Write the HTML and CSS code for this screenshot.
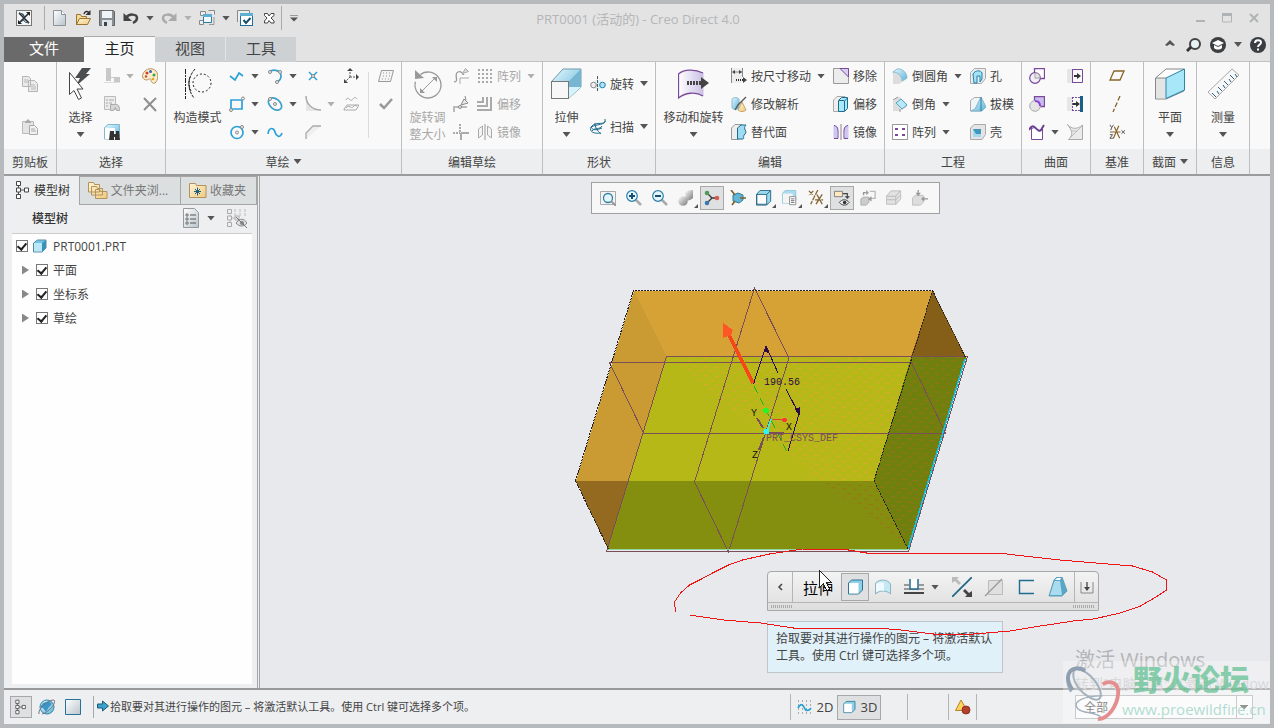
FILE: index.html
```
<!DOCTYPE html>
<html lang="zh-CN">
<head>
    <meta charset="UTF-8">
    <meta name="viewport" content="width=device-width, initial-scale=1.0">
    <title>PRT0001 (活动的) - Creo Direct 4.0</title>
    <link rel="stylesheet" href="styles.css">
</head>
<body>
<svg class="sprite" width="0" height="0" aria-hidden="true">
    <defs>
        <linearGradient id="blue" x1="0" y1="0" x2="1" y2="1"><stop offset="0" stop-color="#e6f8fe"/><stop offset="1" stop-color="#5db5da"/></linearGradient>
        <linearGradient id="gray" x1="0" y1="0" x2="1" y2="1"><stop offset="0" stop-color="#fff"/><stop offset="1" stop-color="#b9c4cb"/></linearGradient>
        <linearGradient id="violet" x1="0" y1="0" x2="1" y2="0"><stop offset="0" stop-color="#fff"/><stop offset="1" stop-color="#c9bfe4"/></linearGradient>
        <linearGradient id="gold" x1="0" y1="0" x2="1" y2="1"><stop offset="0" stop-color="#fff4d4"/><stop offset="1" stop-color="#efca80"/></linearGradient>
        <linearGradient id="ball" x1="0" y1="0" x2="1" y2="1"><stop offset="0" stop-color="#fff"/><stop offset="1" stop-color="#777"/></linearGradient>
    </defs>

    <!-- title bar -->
    <symbol id="i-logo" viewBox="0 0 16 16"><rect x=".5" y=".5" width="15" height="15" fill="#f4f4f4" stroke="#777"/><path d="M3 3l10 10M13 3L3 13" stroke="#222" stroke-width="1.5"/><path d="M3 3c5 1 5 1 5 5s0 4 5 5M6 4l3 3M4 12l4-2" stroke="#234c66" fill="none"/><path d="M10 2h4v4zM2 10v4h4z" fill="#222"/></symbol>
    <symbol id="i-new" viewBox="0 0 16 16"><path d="M2.500.5h8l4 4v11h-12z" fill="url(#gray)" stroke="#8b9298"/><path d="M10.500.5v4h4" fill="#fff" stroke="#8b9298"/></symbol>
    <symbol id="i-open" viewBox="0 0 16 16"><path d="M1.500 15V4.500h4l1 2h5V9" fill="#f6d998" stroke="#9c7434"/><path d="M1.500 14.500l3-6h11l-3 6z" fill="url(#gold)" stroke="#9c7434"/><path d="M9 4c1-3 3-3 5-1.500" stroke="#333" stroke-width="1.500" fill="none"/><path d="M15.500 0v5h-5z" fill="#333"/></symbol>
    <symbol id="i-save" viewBox="0 0 16 16"><path d="M.5.5h14l1 1v14H.5z" fill="#8a8f94" stroke="#666"/><path d="M3 1h10v7H3z" fill="#eef4f7"/><path d="M3 10h10v6H3z" fill="#dfe7ec"/><path d="M5 12h3v4H5z" fill="#444"/></symbol>
    <symbol id="i-undo" viewBox="0 0 16 16"><path d="M3 8c3-5 11-4 11 0 0 3-2 4-4 5" fill="none" stroke="currentColor" stroke-width="2.500"/><path d="M.5 3v8H9z" fill="currentColor"/></symbol>
    <symbol id="i-redo" viewBox="0 0 16 16"><path d="M13 8C10 3 2 4 2 8c0 3 2 4 4 5" fill="none" stroke="currentColor" stroke-width="2.500"/><path d="M15.500 3v8H7z" fill="currentColor"/></symbol>
    <symbol id="i-windows" viewBox="0 0 16 16"><path d="M1.500 1.500h5v4h-5zM9.500.5h6v4M.5 10.500h4v4h-4z" fill="#eee" stroke="#888"/><path d="M4.500 4.500h8v8h-8z" fill="#f4fafd" stroke="#2a7ba0"/><path d="M4 4h9v3H4z" fill="#5fb0d0"/><path d="M10 14.500h5V7" fill="none" stroke="#999"/></symbol>
    <symbol id="i-regen" viewBox="0 0 16 16"><path d="M.5 12V.5h12V3" fill="#eee" stroke="#888"/><rect x="3.500" y="3.500" width="12" height="12" fill="#fff" stroke="#1f6c96"/><path d="M3 3h13v3H3z" fill="#5fb0d0"/><path d="M6.500 10l2.500 3 4.500-5" fill="none" stroke="#14506e" stroke-width="2"/></symbol>
    <symbol id="i-closewin" viewBox="0 0 16 16"><path d="M3.500 3.500h3L8 6l2-2.500h3v2L10 8l3 3v2h-3L8 10.500 6.500 13h-3v-2L6 8 3.500 5.500z" fill="#fff" stroke="#444"/></symbol>
    <symbol id="i-min" viewBox="0 0 16 16"><path d="M4 10h9v2H4z" fill="#b0b3b5"/></symbol>
    <symbol id="i-max" viewBox="0 0 16 16"><path d="M3.500 4h9v8h-9z" fill="none" stroke="#b0b3b5"/><path d="M3 3h10v3H3z" fill="#b0b3b5"/></symbol>
    <symbol id="i-close" viewBox="0 0 16 16"><path d="M4 4l8 8M12 4l-8 8" stroke="#b0b3b5" stroke-width="2"/></symbol>
    <symbol id="i-up" viewBox="0 0 16 16"><path d="M3 8l5-5 5 5-2 1-3-2-3 2z" fill="#555"/></symbol>
    <symbol id="i-find" viewBox="0 0 16 16"><circle cx="9" cy="7" r="5" fill="#e8f2f6" stroke="#444" stroke-width="2"/><path d="M5 10l-4 4" stroke="#333" stroke-width="3"/></symbol>
    <symbol id="i-learn" viewBox="0 0 16 16"><circle cx="8" cy="8" r="8" fill="#3c3f42"/><path d="M2 6l6-3 6 3-6 3zM4 8l4 2 4-2v3c-2 2-6 2-8 0z" fill="#fff"/></symbol>
    <symbol id="i-help" viewBox="0 0 16 16"><circle cx="8" cy="8" r="8" fill="#3c3f42"/><path d="M5 6c0-4 6-3.500 6-.5C11 7.500 8 8 8 10" fill="none" stroke="#fff" stroke-width="2"/><path d="M7 11.500h2v2H7z" fill="#fff"/></symbol>

    <!-- ribbon: clipboard and selection -->
    <symbol id="i-copy" viewBox="0 0 16 16"><path d="M.5.5h6l2 2v8h-8zM6.500 4.500h6l3 3v8h-9z" fill="#eaeaea" stroke="#b5b5b5"/><path d="M2 4h4M2 6h4M9 9h4M9 11h5M9 13h5" stroke="#bbb"/></symbol>
    <symbol id="i-paste" viewBox="0 0 16 16"><path d="M.5 2.500h11v12H.5z" fill="#e4e4e4" stroke="#bbb"/><path d="M3 3l3-3 3 3v1H3z" fill="#aaa"/><path d="M7.500 6.500h5l3 3v6h-8z" fill="#f1f1f1" stroke="#aaa"/><path d="M9 10h4M9 12h5" stroke="#aaa"/></symbol>
    <symbol id="b-select" viewBox="0 0 32 32"><path d="M17 0h9l-5 6h4L11 18l4-8h-5z" fill="#4b4e51"/><path d="M4.500 4.500v22l4.500-4 4.500 9 3-1.500-4.500-9h6z" fill="#fff" stroke="#444"/></symbol>
    <symbol id="i-align" viewBox="0 0 16 16"><path d="M2 0h5v9h9v5h-6v-4H7v3H2z" fill="#c8c8c8"/><path d="M0 14.500h16" stroke="#ddd"/></symbol>
    <symbol id="i-palette" viewBox="0 0 16 16"><path d="M3 3c3-3 8-3 11 0 3 4 2 9-1 12-2 1-4-1-4-3s-2-1-4 0C0 12-1 7 3 3z" fill="#fdeecb" stroke="#b3925c"/><circle cx="5" cy="5" r="1.500" fill="#cf3c2e"/><circle cx="8.500" cy="3.500" r="1.500" fill="#3565b8"/><circle cx="12" cy="7" r="1.500" fill="#3c9b4d"/><circle cx="4" cy="8.500" r="1.200" fill="#c24c3c"/><circle cx="11" cy="11" r="1.300" fill="#e2a22b"/></symbol>
    <symbol id="i-props" viewBox="0 0 16 16"><path d="M.5.5h11v13H.5z" fill="#ececec" stroke="#bbb"/><path d="M2 4h2M5 4h5M2 7h2M5 7h3M2 10h2" stroke="#aaa"/><path d="M6.500 8.500h5c2 0 4 0 4 6h-3l-1-3-2 3h-3z" fill="#d6d6d6" stroke="#aaa"/></symbol>
    <symbol id="i-delete" viewBox="0 0 16 16"><path d="M2 2l12 13M14 2L2 14" stroke="#8f8f8f" stroke-width="2"/></symbol>
    <symbol id="i-findobj" viewBox="0 0 16 16"><path d="M.5 3.500L4 .5h11.500V12L12 15H.5z" fill="url(#blue)" stroke="#7fb8cf"/><path d="M1 4h10v11H1z" fill="#fff"/><path d="M6 7h4v3h2V7h3l1 9h-5v-3h-1v3H5z" fill="#333"/></symbol>

    <!-- ribbon: sketch -->
    <symbol id="b-construct" viewBox="0 0 32 32"><path d="M3.500 1v30" stroke="#222" stroke-dasharray="5 1 2 1"/><path d="M13 1C5 10 5 21 12 30M8 9c-2 5-1 10 1 14" fill="none" stroke="#222" stroke-dasharray="3 1"/><circle cx="20" cy="15" r="9" fill="none" stroke="#222" stroke-dasharray="2 2"/></symbol>
    <symbol id="i-line" viewBox="0 0 16 16"><path d="M1 7l5 4 4-7 4 3" transform="translate(0 1)" fill="none" stroke="#2ba2d6" stroke-width="1.700"/></symbol>
    <symbol id="i-arc" viewBox="0 0 16 16"><path d="M2 4c5-4 12-1 12 4 0 3-2 5-4 6" fill="none" stroke="#3a9fce" stroke-width="1.700"/><g fill="#eee" stroke="#888"><circle cx="3" cy="4" r="1.500"/><circle cx="13" cy="4" r="1.500"/><circle cx="10" cy="14" r="1.500"/></g></symbol>
    <symbol id="i-point" viewBox="0 0 16 16"><path d="M4 4l8 8M12 4l-8 8" stroke="#2ba2d6" stroke-width="1.500"/><circle cx="8" cy="8" r="1.500" fill="#eee" stroke="#888"/></symbol>
    <symbol id="i-csys" viewBox="0 0 16 16"><path d="M7 9V2M7 9h7M7 9l-5 5" stroke="#555" stroke-dasharray="2 1"/><path d="M4 3l3-3 3 3zM13 6l3 3-3 3zM1 11v4h4z" fill="#444"/></symbol>
    <symbol id="i-rect" viewBox="0 0 16 16"><path d="M2 4h11v9H2z" fill="none" stroke="#2ba2d6" stroke-width="1.700"/><g fill="#eee" stroke="#888"><circle cx="14" cy="2.500" r="1.500"/><circle cx="2" cy="14" r="1.500"/></g></symbol>
    <symbol id="i-ellipse" viewBox="0 0 16 16"><ellipse cx="8" cy="8" rx="7.500" ry="5" transform="rotate(40 8 8)" fill="none" stroke="#3a9fce" stroke-width="1.700"/><g fill="#eee" stroke="#888"><circle cx="8" cy="8" r="1.500"/><circle cx="3" cy="3" r="1.500"/></g></symbol>
    <symbol id="i-circle" viewBox="0 0 16 16"><circle cx="8" cy="8.500" r="6" fill="none" stroke="#2ba2d6" stroke-width="1.700"/><g fill="#eee" stroke="#888"><circle cx="8" cy="8.500" r="1.500"/><circle cx="13" cy="3" r="1.500"/></g></symbol>
    <symbol id="i-spline" viewBox="0 0 16 16"><path d="M1 10c1-8 6-6 7-2s5 7 7 1" fill="none" stroke="#2ba2d6" stroke-width="1.700"/></symbol>
    <symbol id="i-fillet" viewBox="0 0 16 16"><path d="M1 0v15h15C7 15 1 9 1 0z" fill="#e6e6e6"/><path d="M1 0c0 8 6 14 15 14" fill="none" stroke="#aaa" stroke-width="1.500"/></symbol>
    <symbol id="i-chamfer" viewBox="0 0 16 16"><path d="M1 15V9l7-7h8L1 15z" fill="#efefef"/><path d="M1 15V9l7-7h8" fill="none" stroke="#aaa" stroke-width="1.300"/></symbol>
    <symbol id="i-project" viewBox="0 0 16 16"><path d="M3 4c2-5 4 2 6 0s3-4 5-1M1 13l3-4h12l-3 5H1zM3 12c3-4 5 1 7-1s2-2 4-1" fill="none" stroke="#aaa"/></symbol>
    <symbol id="i-plane" viewBox="0 0 16 16"><path d="M3.500 2.500h12l-3 11H.5z" fill="#f4f4f4" stroke="#999"/><path d="M5 5h9M5 8h8M4 11h8" stroke="#999" stroke-dasharray="1 2"/></symbol>
    <symbol id="i-ok" viewBox="0 0 16 16"><path d="M2 8l4 4 8-9" fill="none" stroke="#999" stroke-width="2.500"/></symbol>

    <!-- ribbon: edit sketch -->
    <symbol id="b-resize" viewBox="0 0 32 32"><circle cx="16" cy="17" r="13" fill="none" stroke="#999" stroke-width="1.300" stroke-dasharray="72 10" transform="rotate(-125 16 17)"/><path d="M3 2v9l9-1zM8 25v-5l5 5zM25 9v5l-5-5z" fill="#999"/><path d="M10 23l13-13" stroke="#999"/></symbol>
    <symbol id="i-modify" viewBox="0 0 16 16"><path d="M1 14c6 0-1-8 4-10s4 4 6 2" fill="none" stroke="#999" stroke-width="1.300"/><path d="M9.500 5.500l3-5 3 3zM7 10h9M7 10v6" fill="#ddd" stroke="#aaa"/></symbol>
    <symbol id="i-divide" viewBox="0 0 16 16"><path d="M0 11h14M1 11v5" stroke="#bbb" stroke-width="2"/><path d="M8 9l3-6 4 4z" fill="#eee" stroke="#888"/><path d="M12 0l1 4" stroke="#888"/><circle cx="7" cy="11" r="1.500" fill="#eee" stroke="#888"/></symbol>
    <symbol id="i-corner" viewBox="0 0 16 16"><path d="M8 9h8M8 9v7" stroke="#aaa" stroke-width="2"/><path d="M0 9h7M7 0v8" stroke="#aaa" stroke-width="2" stroke-dasharray="2 1"/></symbol>
    <symbol id="i-grid" viewBox="0 0 16 16"><path d="M1 2h15M1 6h15M1 10h15M1 14h15" stroke="#aaa" stroke-width="2" stroke-dasharray="2 2"/></symbol>
    <symbol id="i-offsets" viewBox="0 0 16 16"><path d="M6 1v5H0M10 1v9H0M14 1v13H0" fill="none" stroke="#aaa" stroke-width="2"/></symbol>
    <symbol id="i-mirrors" viewBox="0 0 16 16"><path d="M1.500 5l4-3v9l-4 3zM14.500 5l-4-3v9l4 3z" fill="#f4f4f4" stroke="#aaa"/><path d="M8 0v16" stroke="#999"/></symbol>

    <!-- ribbon: shapes -->
    <symbol id="b-extrude" viewBox="0 0 32 32"><path d="M1 13L12 1h18v18L18 30z" fill="url(#blue)" stroke="#6f9aad"/><path d="M18 13L30 1v18H18z" fill="#76b6d2"/><path d="M18 30V19h12z" fill="#d5f3fc"/><rect x=".5" y="13.500" width="17" height="17" fill="#f7f7f7" stroke="#777"/></symbol>
    <symbol id="i-revolve" viewBox="0 0 16 16"><path d="M4 5l4-2 4 2v8l-4 1-4-1z" fill="#dff2f9"/><circle cx="3.500" cy="9" r="2.800" fill="#eee" stroke="#888"/><circle cx="12.500" cy="9" r="2.800" fill="#aee4f5" stroke="#2080ad"/><path d="M7.500 0v16" stroke="#555" stroke-dasharray="3 1"/></symbol>
    <symbol id="i-sweep" viewBox="0 0 16 16"><path d="M15 0c2 8-9 1-14 8 6-3 14-2 14-6M1 8c-2 5 3 7 10 6M1 8c2 4 6 3 11 1M2 12c3-4 8-1 10-5M5 4c0 6 4 9 6 11" fill="none" stroke="#1f6c8e"/></symbol>

    <!-- ribbon: edit -->
    <symbol id="b-move" viewBox="0 0 32 32"><path d="M.500 30V6c6-5 17-5 25-1v23C18 23 7 25 .500 30z" fill="url(#violet)"/><path d="M25 5C17 1 6 1 .500 6V30C7 25 17 23 25 28" fill="none" stroke="#7a4a9a" stroke-width="1.300"/><path d="M9 15h15" stroke="#444" stroke-width="4" stroke-dasharray="2 1"/><path d="M23 9l8 6-8 6z" fill="#444"/></symbol>
    <symbol id="i-dimmove" viewBox="0 0 16 16"><path d="M1 0h10v15H1z" fill="#eee"/><path d="M.500 0v15M11.500 0v9M2 4h9" stroke="#888"/><path d="M4 2v4L1 4zM8 2v4l3-2zM12 9l4 3-4 3z" fill="#444"/><path d="M5 12h8" stroke="#333" stroke-width="2" stroke-dasharray="1 1"/></symbol>
    <symbol id="i-analytic" viewBox="0 0 16 16"><path d="M1 3c2-2 5-2 7 0v9c-2 2-5 2-7 0z" fill="url(#blue)" stroke="#8fbccd"/><path d="M11 6l4 8c-2 2-6 2-8 0z" fill="url(#gold)" stroke="#c9a468"/><path d="M15 1L7 9l-3 5" stroke="#555" stroke-width="1.300" fill="none"/></symbol>
    <symbol id="i-replace" viewBox="0 0 16 16"><path d="M.5 4L4 .5h7V12l-4 3.500H.5z" fill="#eee" stroke="#999"/><path d="M6.500 4L10 1h5c-4 4 2 6-1 9s0 4-2 5H6.500z" fill="#9fdcf2" stroke="#1f6c8e"/></symbol>
    <symbol id="i-remove" viewBox="0 0 16 16"><path d="M.5.5h15v15H.5z" fill="#ececec" stroke="#999"/><path d="M7 .5h8.500V9z" fill="#d9cdf4" stroke="#7a4a9a"/></symbol>
    <symbol id="i-offset" viewBox="0 0 16 16"><path d="M.5 4L4 .5h8v12l-3 3H.5z" fill="#eee" stroke="#aaa"/><path d="M5.500 4.500l3-3h6v11l-3 3h-6z" fill="#a9e8fa" stroke="#1f6c8e"/><path d="M11.500 15V5l3-3M6 4.500h5" fill="none" stroke="#1f6c8e"/></symbol>
    <symbol id="i-mirror" viewBox="0 0 16 16"><path d="M.5 1.500h2c3 2 3 4 2 8v5h-4zM15.500 1.500h-2c-3 2-3 4-2 8v5h4z" fill="#cfc6f2"/><path d="M1 1.500c5 1 4 5 4 13H1M15 1.500c-5 1-4 5-4 13h4" fill="none" stroke="#7a4a9a"/><path d="M8 0v16" stroke="#888"/></symbol>

    <!-- ribbon: engineering -->
    <symbol id="i-round" viewBox="0 0 16 16"><path d="M1 7v9h6l8-5V8C15 4 10 0 5 1L0 4z" fill="#ddd"/><path d="M5 1c5-1 10 4 10 9l-5 3c0-5-4-9-9-9z" fill="url(#blue)" stroke="#8bbfd3"/></symbol>
    <symbol id="i-cham" viewBox="0 0 16 16"><path d="M1 5v10h7l7-4V8L8 1H5z" fill="#ddd"/><path d="M1 4l5-3M8 13v3" stroke="#999"/><path d="M9 3l6 6-5 4-6-6z" fill="#b8e9f8" stroke="#5aa3c1"/></symbol>
    <symbol id="i-pattern" viewBox="0 0 16 16"><path d="M.5.5h15v15H.5z" fill="#fff" stroke="#999"/><path d="M3 4h3v2H3zM10 4h3v2h-3zM3 10h3v2H3zM10 10h3v2h-3z" fill="#7a4a9a"/></symbol>
    <symbol id="i-hole" viewBox="0 0 16 16"><path d="M.5 4.500l4-4h11v10l-4 5H.5z" fill="#ededed" stroke="#aaa"/><path d="M3 6c2-4 8-4 9-1v6l-2 3V8H7v7H4z" fill="#a6e2f5" stroke="#2080ad"/></symbol>
    <symbol id="i-draft" viewBox="0 0 16 16"><path d="M.5 15V4.500l4-3H11V15z" fill="#eef5f8" stroke="#aaa"/><path d="M5 13L11 1l5 10-4 4H1z" fill="url(#blue)" stroke="#7fb5ca"/><path d="M11 1v14" stroke="#2d7c9d"/></symbol>
    <symbol id="i-shell" viewBox="0 0 16 16"><path d="M.5 4L4 .5h11.500v10L12 15.500H.5z" fill="#e4e4e4" stroke="#aaa"/><path d="M3 5h8v8H3z" fill="#3f97bf"/><path d="M3 13V5l3 5h5v3z" fill="#a4d9ed"/></symbol>

    <!-- ribbon: surfaces and datums -->
    <symbol id="i-merge" viewBox="0 0 16 16"><path d="M5.500.5h10v10h-10z" fill="#fff" stroke="#7a4a9a" stroke-width="1.300"/><circle cx="6" cy="10" r="5.300" fill="#f2f0f6" fill-opacity=".9" stroke="#7a4a9a" stroke-width="1.200"/><path d="M6 10V5c3 0 5 2 5 5z" fill="#e4e4e4" stroke="#aaa"/></symbol>
    <symbol id="i-trim" viewBox="0 0 16 16"><path d="M5.500.5h10v10h-10z" fill="#cbbdf0" stroke="#7a4a9a" stroke-width="1.300"/><circle cx="6" cy="10" r="5.300" fill="#e4e4e4" stroke="#aaa"/><path d="M6 5c3 0 5 2 5 5" fill="none" stroke="#8c44d6" stroke-width="2"/></symbol>
    <symbol id="i-fillsurf" viewBox="0 0 16 16"><path d="M2.500 3v12.500h11V5C10 11 7 0 2.500 5" fill="#fff" stroke="#7a4a9a"/><path d="M0 6c5-10 8 4 12 0l3-5" fill="none" stroke="#6d3f92" stroke-width="2"/></symbol>
    <symbol id="i-extend" viewBox="0 0 16 16"><path d="M0 1h5v14H0z" fill="#e6e6e6"/><path d="M5 1.500h10.500v13H5M5.500 1v14" fill="none" stroke="#7a4a9a"/><path d="M7 7h3V5l4 3-4 3V9H7z" fill="#333"/></symbol>
    <symbol id="i-extendto" viewBox="0 0 16 16"><path d="M0 1h5v14H0z" fill="#e6e6e6"/><path d="M5 1.500h9M5 14.500h9M5.500 1v14" stroke="#7a4a9a" stroke-dasharray="2 1"/><path d="M13 0h3v16h-3z" fill="#175f86"/><path d="M6 7h3V5l4 3-4 3V9H6z" fill="#333"/></symbol>
    <symbol id="i-style" viewBox="0 0 16 16"><path d="M.5.5c4 5 10 5 15 .5v14.500H1.500C7 10 5 7 .5.5z" fill="#ebebeb" stroke="#aaa"/><path d="M1.500 15.500l14-14M5 7l5 0" stroke="#bbb"/></symbol>
    <symbol id="i-dplane" viewBox="0 0 16 16"><path d="M5 3h10l-4 9H1z" fill="none" stroke="#86652a" stroke-width="1.300"/></symbol>
    <symbol id="i-axis" viewBox="0 0 16 16"><path d="M11 0L4 16" stroke="#86652a" stroke-width="1.300" stroke-dasharray="5 2"/></symbol>
    <symbol id="i-dcsys" viewBox="0 0 18 16"><path d="M1 8h12M6 2l6 13M11 1L5 15" stroke="#86652a" stroke-width="1.300"/><path d="M1 0l2 3 2-3M3 3l-1 3M14 6l4 4M18 6l-4 4M1 11h3l-3 4h4" fill="none" stroke="#444"/></symbol>
    <symbol id="b-section" viewBox="0 0 32 32"><path d="M1.500 10L12 1h18v22l-18 8H1.500z" fill="#fdfdfd" stroke="#888"/><path d="M2 10h10v20H2z" fill="#e4e4e4"/><path d="M12 10L30.500 1v21L12 30.500z" fill="#a8e6fa" stroke="#2a84ab"/><path d="M1.500 10H12" stroke="#888"/></symbol>
    <symbol id="b-ruler" viewBox="0 0 32 32"><path d="M1 24L25 1l7 6L8 31z" fill="#f7f7f7" stroke="#aaa"/><path d="M9 29l-4-4M12 26l-2-3M15 23l-4-4M18 20l-2-3M21 17l-4-4M24 14l-2-3M27 11l-4-4M30 9l-2-3" stroke="#235f83"/></symbol>

    <!-- navigator -->
    <symbol id="i-tree" viewBox="0 0 16 20"><path d="M3.500 4v13M5 10h5" stroke="#555"/><path d="M1.500 1.500h4v4h-4zM1.500 8h4v4h-4zM9.500 8h4v4h-4zM1.500 14.500h4v4h-4z" fill="#fff" stroke="#444"/></symbol>
    <symbol id="i-folders" viewBox="0 0 20 18"><path d="M.5 11V1.500h5l1 2h5V11zM3.500 14V5.500h5l1 2h5V14zM7.500 17.500V8.500h4l1 2h6.500v7z" fill="url(#gold)" stroke="#b3925c"/></symbol>
    <symbol id="i-fav" viewBox="-2 -1 20 18"><path d="M.5 15.500V1.500h6l1 2h9.500v12z" fill="url(#gold)" stroke="#b3925c"/><path d="M8.500 5.500v8M5 9.500h7M6 7l5 5M11 7l-5 5" stroke="#1d607f"/></symbol>
    <symbol id="i-settings" viewBox="0 0 16 20"><path d="M.5.5h11l4 4v15H.5z" fill="url(#gray)" stroke="#999"/><path d="M7 7h6M7 11h6M7 15h6" stroke="#555"/><path d="M3 6h2v2H3zM3 10h2v2H3zM3 14h2v2H3z" fill="#fff" stroke="#555" stroke-width=".8"/></symbol>
    <symbol id="i-hide" viewBox="0 0 20 20"><path d="M3 3v14M5 10h4M8 1v8M13 1v8M18 1v8" stroke="#bbb" stroke-dasharray="3 1"/><path d="M.5 1.500h4v4h-4zM.5 8h4v4h-4zM.5 14.500h4v4h-4zM8 8h4v4H8z" fill="#eee" stroke="#aaa"/><path d="M9 15c4-5 8-5 11 0-3 4-8 4-11 0z" fill="#ddd" stroke="#888"/><circle cx="15" cy="15" r="2" fill="#888"/><path d="M9 9l11 11" stroke="#777"/></symbol>
    <symbol id="i-part" viewBox="0 0 16 16"><path d="M1.500 5l4-3h8.500v8l-4 4H1.500z" fill="#72c5e6" stroke="#5a8aa0"/><path d="M2 5h8v8.500H2z" fill="#b9e9f8"/><path d="M10 5l4-3v8l-4 4z" fill="#3a92b8"/></symbol>

    <!-- view toolbar -->
    <symbol id="i-refit" viewBox="0 0 16 16"><path d="M.5 1.500h15v13H.5z" fill="#f4f4f4" stroke="#aaa"/><circle cx="8" cy="8" r="4.500" fill="#e4f6fc" stroke="#2a80a5" stroke-width="1.300"/><path d="M11 11l5 5" stroke="#999" stroke-width="2"/></symbol>
    <symbol id="i-zoomin" viewBox="0 0 16 16"><path d="M10 10l5 5" stroke="#aaa" stroke-width="2.500"/><circle cx="6" cy="6" r="5.300" fill="#e4f6fc" stroke="#2a80a5" stroke-width="1.200"/><path d="M3 6h6M6 3v6" stroke="#174f70" stroke-width="2"/></symbol>
    <symbol id="i-zoomout" viewBox="0 0 16 16"><path d="M10 10l5 5" stroke="#aaa" stroke-width="2.500"/><circle cx="6" cy="6" r="5.300" fill="#e4f6fc" stroke="#2a80a5" stroke-width="1.200"/><path d="M3 6h6" stroke="#174f70" stroke-width="2"/></symbol>
    <symbol id="i-repaint" viewBox="0 0 16 16"><path d="M7 3c1-2 5-3 8-3v8c-2 2-5 3-7 2z" fill="url(#ball)"/><circle cx="5" cy="11" r="4.800" fill="url(#ball)"/></symbol>
    <symbol id="i-spin" viewBox="0 0 16 16"><path d="M3 3l5 5-5 5M8 8h5" fill="none" stroke="#333" stroke-width="1.300"/><circle cx="3" cy="3" r="2.300" fill="#4f9b59"/><circle cx="3" cy="13" r="2.300" fill="#3c78b0"/><circle cx="13" cy="8" r="2.300" fill="#d85b50"/></symbol>
    <symbol id="i-orient" viewBox="0 0 16 16"><path d="M3 5l5-2 5 2v5l-4 3-6-2z" fill="#62b5d5" stroke="#2c7c9d"/><path d="M1 0l4 5M10 8h6M5 11l-3 4" fill="none" stroke="#80602b" stroke-width="1.700"/></symbol>
    <symbol id="i-display" viewBox="0 0 18 18"><path d="M.5 5l4-4.500h12v12L12 17H.5z" fill="#9ad8ed" stroke="#1f6080"/><path d="M1 5h11v11H1z" fill="#fff" stroke="#1f6080"/><path d="M12 5l4-4" stroke="#1f6080"/></symbol>
    <symbol id="i-views" viewBox="0 0 18 18"><path d="M.5 4l3-3.500h12V12L12 15H.5z" fill="#a8dcee" stroke="#8cc3d8"/><path d="M1 4h11v11H1z" fill="#f4f4f4"/><path d="M8.500 7.500h7v9h-7z" fill="#fff" stroke="#888"/><path d="M10 10h4M10 12h4M10 14h4" stroke="#666"/></symbol>
    <symbol id="i-datums" viewBox="0 0 18 18"><path d="M1 1l5 5M6 1L1 6M11 0L3 16M8 11h9M10 5l6 11M16 5L9 16" stroke="#80602b" stroke-width="1.400" stroke-dasharray="6 1"/></symbol>
    <symbol id="i-annot" viewBox="0 0 18 18"><path d="M.5 1.500h9v6h-9z" fill="#ffe9bd" stroke="#777"/><path d="M10 4h5v4" fill="none" stroke="#444" stroke-width="1.300"/><path d="M12 7h6l-3 3z" fill="#444"/><path d="M6 14c3-4 8-4 11 0-3 4-8 4-11 0z" fill="#eee" stroke="#333"/><circle cx="12" cy="14" r="2" fill="#333"/></symbol>
    <symbol id="i-rot" viewBox="0 0 18 18"><path d="M1 10l3-2h6v6l-3 3H1z" fill="#ccc" stroke="#aaa"/><path d="M11 1.500h6v8h-5" fill="none" stroke="#bbb" stroke-width="1.500"/><path d="M4 6V3h3" fill="none" stroke="#999" stroke-width="1.500"/><path d="M7 0l3 3-3 3zM9 10l4-3v6z" fill="#999"/></symbol>
    <symbol id="i-box" viewBox="0 0 18 18"><path d="M.5 7l5-6h11v9l-5 6H.5z" fill="#e2e2e2" stroke="#bbb"/><path d="M1 11h10l5-5M11 7v9M1 7h10l5-6" fill="none" stroke="#b5b5b5"/></symbol>
    <symbol id="i-boxarrows" viewBox="0 0 18 18"><path d="M.5 9l3-3h9v8l-3 3H.5z" fill="#ddd" stroke="#bbb"/><path d="M4 3h6l-3 4zM10 10l4-3v6z" fill="#999"/><path d="M7 0v4M13 10h5" stroke="#999" stroke-width="1.500"/></symbol>

    <!-- extrude toolbar -->
    <symbol id="i-solid" viewBox="0 0 20 20"><path d="M3.500 6l3-3h11v10l-4 4h-10z" fill="#8fd0e8" stroke="#2a7593"/><path d="M4 6h9.500v10.500H4z" fill="#fff"/></symbol>
    <symbol id="i-surface" viewBox="0 0 20 20"><path d="M2.500 17V6c4-4 12-4 15 1v10c-4-4-11-4-15 0z" fill="#c4e8f4" stroke="#8fb3c2"/><path d="M3 15V7c3-2 6-2 8-1v8c-3-1-5 0-8 1z" fill="#eefaff"/></symbol>
    <symbol id="i-depth" viewBox="0 0 20 20"><path d="M0 8h5M15 8h5M0 12h20" stroke="#999" stroke-width="2"/><path d="M0 16h20" stroke="#444" stroke-width="2"/><path d="M6 2v10h8V2" fill="#fff" stroke="#1f6c8e" stroke-width="1.500"/></symbol>
    <symbol id="i-flip" viewBox="0 0 20 20"><path d="M0 20L20 0" stroke="#1f6584" stroke-width="1.700"/><path d="M0 0h7L5 2l4 4-2 2-4-4-3 2z" fill="#bbb"/><path d="M20 20h-7l2-2-4-4 2-2 4 4 3-2z" fill="#444"/></symbol>
    <symbol id="i-cut" viewBox="0 0 20 20"><path d="M4.500 3.500h14v14h-14z" fill="#e0e0e0" stroke="#bbb"/><path d="M1 19L18 2" stroke="#999" stroke-width="1.300"/></symbol>
    <symbol id="i-thicken" viewBox="0 0 20 20"><path d="M18 3.500H3.500v13H18" fill="none" stroke="#1f6c8e" stroke-width="1.400"/></symbol>
    <symbol id="i-taper" viewBox="0 0 20 20"><path d="M1 19L6 3l3-3h5l5 14-5 5z" fill="#59a7c8" stroke="#5f9fb8"/><path d="M2 18L6.500 4H12l2 14z" fill="#a9dcee"/><path d="M7 3l2-2h4l-1 2z" fill="#fff"/></symbol>
    <symbol id="i-pin" viewBox="0 0 16 16"><path d="M2 3v11h12V3" fill="none" stroke="#888"/><path d="M8 3v5" stroke="#444" stroke-width="1.300"/><path d="M5 8h6l-3 4z" fill="#444"/></symbol>

    <!-- status bar -->
    <symbol id="i-browser" viewBox="0 0 18 18"><circle cx="9" cy="9" r="7" fill="url(#blue)" stroke="#3084ab"/><path d="M5 5l6-2 3 3-3 3-3 5-3-4-3-1z" fill="#3b95c6"/><path d="M1 16c-2-5 11-15 15-14 3 3-6 13-12 14" fill="none" stroke="#777"/></symbol>
    <symbol id="i-full" viewBox="0 0 18 18"><path d="M1.500 1.500h15v15h-15z" fill="url(#gray)" stroke="#277296"/></symbol>
    <symbol id="i-prompt" viewBox="0 0 12 12"><path d="M.5 4h5V1l6 5-6 5V8h-5z" fill="#3ba2cd" stroke="#195a77"/></symbol>
    <symbol id="i-2d" viewBox="0 0 16 16"><path d="M1 2h14M1 6h14M1 10h14M1 14h14" stroke="#666" stroke-dasharray="1 3"/><path d="M1 9c4-7 6-1 7 1s4 2 6-1" fill="none" stroke="#2ba2d6" stroke-width="1.700"/></symbol>
    <symbol id="i-warn" viewBox="0 0 16 16"><path d="M6 1l6 10.500H.5z" fill="#fbd35f" stroke="#b98022"/><circle cx="11" cy="11" r="4" fill="#b5402e" stroke="#8d3021"/></symbol>
</svg>

<div class="window">
    <header class="titlebar">
        <div class="quick">
            <svg class="icon"><use href="#i-logo"/></svg>
            <span class="sep"></span>
            <button aria-label="新建"><svg class="icon"><use href="#i-new"/></svg></button>
            <button aria-label="打开"><svg class="icon"><use href="#i-open"/></svg></button>
            <button aria-label="保存"><svg class="icon"><use href="#i-save"/></svg></button>
            <button aria-label="撤消"><svg class="icon"><use href="#i-undo"/></svg></button>
            <span class="caret"></span>
            <button class="off" aria-label="重做"><svg class="icon"><use href="#i-redo"/></svg></button>
            <span class="caret off"></span>
            <button aria-label="窗口"><svg class="icon"><use href="#i-windows"/></svg></button>
            <span class="caret"></span>
            <button aria-label="重新生成"><svg class="icon"><use href="#i-regen"/></svg></button>
            <button aria-label="关闭文件"><svg class="icon"><use href="#i-closewin"/></svg></button>
            <span class="sep sep-tight"></span>
            <span class="caret caret-bar"></span>
        </div>
        <h1 class="title">PRT0001 (活动的) - Creo Direct 4.0</h1>
        <div class="controls">
            <button aria-label="最小化"><svg class="icon"><use href="#i-min"/></svg></button>
            <button aria-label="最大化"><svg class="icon"><use href="#i-max"/></svg></button>
            <button aria-label="关闭"><svg class="icon"><use href="#i-close"/></svg></button>
        </div>
    </header>

    <nav class="tabs">
        <button class="tab tab-file">文件</button>
        <button class="tab tab-active">主页</button>
        <button class="tab">视图</button>
        <button class="tab">工具</button>
        <div class="tabs-right">
            <button aria-label="折叠"><svg class="icon"><use href="#i-up"/></svg></button>
            <button aria-label="搜索"><svg class="icon"><use href="#i-find"/></svg></button>
            <button aria-label="学习"><svg class="icon"><use href="#i-learn"/></svg></button>
            <span class="caret"></span>
            <button aria-label="帮助"><svg class="icon"><use href="#i-help"/></svg></button>
        </div>
    </nav>

    <section class="ribbon">
        <div class="group g-clip">
            <div class="body">
                <div class="stack two">
                    <button class="tool" aria-label="复制"><svg class="icon"><use href="#i-copy"/></svg></button>
                    <button class="tool" aria-label="粘贴"><svg class="icon"><use href="#i-paste"/></svg></button>
                </div>
            </div>
            <div class="caption">剪贴板</div>
        </div>
        <div class="group g-select">
            <div class="body">
                <button class="big"><svg class="icon-big"><use href="#b-select"/></svg><span>选择</span><i class="caret"></i></button>
                <div class="stack col">
                    <button class="tool off" aria-label="对齐"><svg class="icon"><use href="#i-align"/></svg><i class="caret"></i></button>
                    <button class="tool off" aria-label="属性"><svg class="icon"><use href="#i-props"/></svg></button>
                    <button class="tool" aria-label="查找"><svg class="icon"><use href="#i-findobj"/></svg></button>
                </div>
                <div class="stack">
                    <button class="tool" aria-label="外观"><svg class="icon"><use href="#i-palette"/></svg></button>
                    <button class="tool" aria-label="删除"><svg class="icon"><use href="#i-delete"/></svg></button>
                </div>
            </div>
            <div class="caption">选择</div>
        </div>
        <div class="group g-sketch">
            <div class="body">
                <button class="big"><svg class="icon-big"><use href="#b-construct"/></svg><span>构造模式</span></button>
                <div class="stack col">
                    <button class="tool" aria-label="线"><svg class="icon"><use href="#i-line"/></svg><i class="caret"></i></button>
                    <button class="tool" aria-label="矩形"><svg class="icon"><use href="#i-rect"/></svg><i class="caret"></i></button>
                    <button class="tool" aria-label="圆"><svg class="icon"><use href="#i-circle"/></svg><i class="caret"></i></button>
                </div>
                <div class="stack col">
                    <button class="tool" aria-label="弧"><svg class="icon"><use href="#i-arc"/></svg><i class="caret"></i></button>
                    <button class="tool" aria-label="椭圆"><svg class="icon"><use href="#i-ellipse"/></svg><i class="caret"></i></button>
                    <button class="tool" aria-label="样条"><svg class="icon"><use href="#i-spline"/></svg></button>
                </div>
                <div class="stack col">
                    <button class="tool" aria-label="点"><svg class="icon"><use href="#i-point"/></svg></button>
                    <button class="tool off" aria-label="圆角"><svg class="icon"><use href="#i-fillet"/></svg><i class="caret"></i></button>
                    <button class="tool off" aria-label="倒角"><svg class="icon"><use href="#i-chamfer"/></svg></button>
                </div>
                <div class="stack ruled">
                    <button class="tool" aria-label="坐标系"><svg class="icon"><use href="#i-csys"/></svg></button>
                    <button class="tool off" aria-label="投影"><svg class="icon"><use href="#i-project"/></svg></button>
                </div>
                <div class="stack">
                    <button class="tool off" aria-label="草绘平面"><svg class="icon"><use href="#i-plane"/></svg></button>
                    <button class="tool off" aria-label="确定"><svg class="icon"><use href="#i-ok"/></svg></button>
                </div>
            </div>
            <div class="caption">草绘<i class="caret"></i></div>
        </div>
        <div class="group g-editsk">
            <div class="body">
                <button class="big off"><svg class="icon-big"><use href="#b-resize"/></svg><span>旋转调<br>整大小</span></button>
                <div class="stack narrow">
                    <button class="tool off" aria-label="修改"><svg class="icon"><use href="#i-modify"/></svg></button>
                    <button class="tool off" aria-label="分割"><svg class="icon"><use href="#i-divide"/></svg></button>
                    <button class="tool off" aria-label="拐角"><svg class="icon"><use href="#i-corner"/></svg></button>
                </div>
                <div class="stack">
                    <button class="tool off"><svg class="icon"><use href="#i-grid"/></svg><span>阵列</span><i class="caret"></i></button>
                    <button class="tool off"><svg class="icon"><use href="#i-offsets"/></svg><span>偏移</span></button>
                    <button class="tool off"><svg class="icon"><use href="#i-mirrors"/></svg><span>镜像</span></button>
                </div>
            </div>
            <div class="caption">编辑草绘</div>
        </div>
        <div class="group g-shape">
            <div class="body">
                <button class="big"><svg class="icon-big"><use href="#b-extrude"/></svg><span>拉伸</span><i class="caret"></i></button>
                <div class="stack two">
                    <button class="tool"><svg class="icon"><use href="#i-revolve"/></svg><span>旋转</span><i class="caret"></i></button>
                    <button class="tool"><svg class="icon"><use href="#i-sweep"/></svg><span>扫描</span><i class="caret"></i></button>
                </div>
            </div>
            <div class="caption">形状</div>
        </div>
        <div class="group g-edit">
            <div class="body">
                <button class="big"><svg class="icon-big"><use href="#b-move"/></svg><span>移动和旋转</span><i class="caret"></i></button>
                <div class="stack wide">
                    <button class="tool"><svg class="icon"><use href="#i-dimmove"/></svg><span>按尺寸移动</span><i class="caret"></i></button>
                    <button class="tool"><svg class="icon"><use href="#i-analytic"/></svg><span>修改解析</span></button>
                    <button class="tool"><svg class="icon"><use href="#i-replace"/></svg><span>替代面</span></button>
                </div>
                <div class="stack">
                    <button class="tool"><svg class="icon"><use href="#i-remove"/></svg><span>移除</span></button>
                    <button class="tool"><svg class="icon"><use href="#i-offset"/></svg><span>偏移</span></button>
                    <button class="tool"><svg class="icon"><use href="#i-mirror"/></svg><span>镜像</span></button>
                </div>
            </div>
            <div class="caption">编辑</div>
        </div>
        <div class="group g-eng">
            <div class="body">
                <div class="stack medium">
                    <button class="tool"><svg class="icon"><use href="#i-round"/></svg><span>倒圆角</span><i class="caret"></i></button>
                    <button class="tool"><svg class="icon"><use href="#i-cham"/></svg><span>倒角</span><i class="caret"></i></button>
                    <button class="tool"><svg class="icon"><use href="#i-pattern"/></svg><span>阵列</span><i class="caret"></i></button>
                </div>
                <div class="stack">
                    <button class="tool"><svg class="icon"><use href="#i-hole"/></svg><span>孔</span></button>
                    <button class="tool"><svg class="icon"><use href="#i-draft"/></svg><span>拔模</span></button>
                    <button class="tool"><svg class="icon"><use href="#i-shell"/></svg><span>壳</span></button>
                </div>
            </div>
            <div class="caption">工程</div>
        </div>
        <div class="group g-surf">
            <div class="body">
                <div class="stack col">
                    <button class="tool" aria-label="合并"><svg class="icon"><use href="#i-merge"/></svg></button>
                    <button class="tool" aria-label="修剪"><svg class="icon"><use href="#i-trim"/></svg></button>
                    <button class="tool" aria-label="填充"><svg class="icon"><use href="#i-fillsurf"/></svg><i class="caret"></i></button>
                </div>
                <div class="stack">
                    <button class="tool" aria-label="延伸"><svg class="icon"><use href="#i-extend"/></svg></button>
                    <button class="tool" aria-label="延伸至"><svg class="icon"><use href="#i-extendto"/></svg></button>
                    <button class="tool" aria-label="样式"><svg class="icon"><use href="#i-style"/></svg></button>
                </div>
            </div>
            <div class="caption">曲面</div>
        </div>
        <div class="group g-one">
            <div class="body">
                <div class="stack">
                    <button class="tool" aria-label="基准平面"><svg class="icon"><use href="#i-dplane"/></svg></button>
                    <button class="tool" aria-label="基准轴"><svg class="icon"><use href="#i-axis"/></svg></button>
                    <button class="tool" aria-label="基准坐标系"><svg class="icon"><use href="#i-dcsys"/></svg></button>
                </div>
            </div>
            <div class="caption">基准</div>
        </div>
        <div class="group g-one">
            <div class="body">
                <button class="big"><svg class="icon-big"><use href="#b-section"/></svg><span>平面</span><i class="caret"></i></button>
            </div>
            <div class="caption">截面<i class="caret"></i></div>
        </div>
        <div class="group g-one">
            <div class="body">
                <button class="big"><svg class="icon-big"><use href="#b-ruler"/></svg><span>测量</span><i class="caret"></i></button>
            </div>
            <div class="caption">信息</div>
        </div>
        <div class="group g-rest">
            <div class="body"></div>
            <div class="caption"></div>
        </div>
    </section>

    <main class="workspace">
        <aside class="navigator">
            <div class="nav-tabs">
                <button class="nav-tab nav-tab-active"><svg class="icon-tall"><use href="#i-tree"/></svg>模型树</button>
                <button class="nav-tab nav-folders"><svg class="icon-tall"><use href="#i-folders"/></svg>文件夹浏...</button>
                <button class="nav-tab nav-fav"><svg class="icon-tall"><use href="#i-fav"/></svg>收藏夹</button>
            </div>
            <div class="nav-head">
                <h2>模型树</h2>
                <button aria-label="设置"><svg class="icon-tall"><use href="#i-settings"/></svg></button>
                <span class="caret"></span>
                <button aria-label="显示"><svg class="icon-tall"><use href="#i-hide"/></svg></button>
            </div>
            <ul class="tree">
                <li><input type="checkbox" id="t0" checked><svg class="icon"><use href="#i-part"/></svg><label for="t0">PRT0001.PRT</label></li>
                <li class="child"><i class="twist"></i><input type="checkbox" id="t1" checked><label for="t1">平面</label></li>
                <li class="child"><i class="twist"></i><input type="checkbox" id="t2" checked><label for="t2">坐标系</label></li>
                <li class="child"><i class="twist"></i><input type="checkbox" id="t3" checked><label for="t3">草绘</label></li>
            </ul>
        </aside>

        <section class="canvas">
            <svg class="model" viewBox="260 176 1010 512" preserveAspectRatio="xMidYMin meet">
                <defs>
                    <pattern id="dash" width="11" height="9" patternUnits="userSpaceOnUse" patternTransform="skewY(4)">
                        <path d="M0 2.500h4M6 6.500h4" stroke="#e0a62f"/>
                    </pattern>
                    <pattern id="dash-dark" width="11" height="9" patternUnits="userSpaceOnUse" patternTransform="skewY(4)">
                        <path d="M0 2.500h4M6 6.500h4" stroke="#a06f18"/>
                    </pattern>
                </defs>
                <!-- faces -->
                <path d="M634 291h299l-22 66H667z" fill="#d6a235"/>
                <path d="M634 291l33 66-39 124h-52z" fill="#cb9b33"/>
                <path d="M576 481h52l-20 68z" fill="#936a20"/>
                <path d="M933 291l33 66h-55z" fill="#855f18"/>
                <path d="M667 357h244l-37 124H628z" fill="#b6b818"/>
                <path d="M628 481h246l34 68H608z" fill="#848f10"/>
                <path d="M911 357h55l-58 192-34-68z" fill="#70800e"/>
                <path d="M667 357h244l-37 124h-51z" fill="url(#dash)"/>
                <path d="M823 481h51l34 68zM911 357h55l-58 192-34-68z" fill="url(#dash-dark)"/>
                <!-- datum planes -->
                <g fill="none" stroke="#7a4f58">
                    <path d="M666.500 356.500h301L908.500 551.500H606.500z"/>
                    <path d="M609.500 362.500h302l34 70.500H643.500z"/>
                    <path d="M754.500 288l34.500 70-60.500 194-34-70z"/>
                </g>
                <!-- edges -->
                <path d="M608 549.500h300" stroke="#8fd9a0"/>
                <path d="M965 359l-57 190" stroke="#12c4ea" stroke-width="1.500"/>
                <path d="M575.500 481l58-190.500h299l33 67M575.500 481l33 68M932.500 290.500L874 481l34 68" fill="none" stroke="#222" stroke-dasharray="2 1"/>
                <!-- dimension -->
                <g fill="none" stroke="#2b0a45">
                    <path d="M753.500 384l12.500-38 12 27M786 389l13 25-11 37"/>
                    <path d="M765 351l1-5 3 7zM795 409l4 5v-6z" fill="#2b0a45"/>
                </g>
                <path d="M754 386l34 68" stroke="#18b51c" stroke-dasharray="8 5"/>
                <path d="M753 383l-24-48" stroke="#f8461c" stroke-width="4"/>
                <path d="M723 323l10 7-2 5-8 3z" fill="#ff5626"/>
                <!-- coordinate system -->
                <path d="M766 433h18M757 418l6 10M764 437l-5 13" stroke="#7a4f58" stroke-width="2"/>
                <path d="M771 419.500h14" stroke="#d8452a"/>
                <path d="M767 431l4-12" stroke="#39f0f0" stroke-width="1.500"/>
                <circle cx="766" cy="410.500" r="3" fill="#2bf32b"/>
                <circle cx="784.500" cy="420" r="2.200" fill="#fb3434"/>
                <circle cx="766.500" cy="431.500" r="3" fill="#30f4f4"/>
                <g class="model-text">
                    <text x="764" y="385" fill="#2b0a45">190.56</text>
                    <text x="766" y="441" fill="#7a4f58">PRT_CSYS_DEF</text>
                    <text x="751" y="416" fill="#111">Y</text>
                    <text x="786" y="430" fill="#111">X</text>
                    <text x="752" y="458" fill="#111">Z</text>
                </g>
            </svg>

            <div class="viewbar">
                <button aria-label="重新调整"><svg class="icon"><use href="#i-refit"/></svg></button>
                <button aria-label="放大"><svg class="icon"><use href="#i-zoomin"/></svg></button>
                <button aria-label="缩小"><svg class="icon"><use href="#i-zoomout"/></svg></button>
                <button class="more" aria-label="渲染"><svg class="icon"><use href="#i-repaint"/></svg></button>
                <button class="pressed" aria-label="旋转中心"><svg class="icon"><use href="#i-spin"/></svg></button>
                <button aria-label="方向"><svg class="icon"><use href="#i-orient"/></svg></button>
                <button class="more" aria-label="显示样式"><svg class="icon"><use href="#i-display"/></svg></button>
                <button class="more" aria-label="视图"><svg class="icon"><use href="#i-views"/></svg></button>
                <button class="more" aria-label="基准显示"><svg class="icon"><use href="#i-datums"/></svg></button>
                <button class="pressed" aria-label="注释显示"><svg class="icon"><use href="#i-annot"/></svg></button>
                <button aria-label="旋转"><svg class="icon"><use href="#i-rot"/></svg></button>
                <button aria-label="剖面"><svg class="icon"><use href="#i-box"/></svg></button>
                <button aria-label="法向"><svg class="icon"><use href="#i-boxarrows"/></svg></button>
            </div>

            <div class="floatbar">
                <div class="float-row">
                    <button class="float-fold" aria-label="折叠"><svg width="6" height="8" viewBox="0 0 6 8"><path d="M5 1L2 4l3 3" fill="none" stroke="#444" stroke-width="1.500"/></svg></button>
                    <span class="float-title">拉伸</span>
                    <button class="float-sm pressed" aria-label="实体"><svg class="icon-mid"><use href="#i-solid"/></svg></button>
                    <button class="float-sm" aria-label="曲面"><svg class="icon-mid"><use href="#i-surface"/></svg></button>
                    <button class="float-depth" aria-label="深度"><svg class="icon-mid"><use href="#i-depth"/></svg><i class="caret"></i></button>
                    <button class="float-lg" aria-label="反向"><svg class="icon-mid"><use href="#i-flip"/></svg></button>
                    <button class="float-lg" aria-label="移除材料"><svg class="icon-mid"><use href="#i-cut"/></svg></button>
                    <button class="float-lg" aria-label="加厚"><svg class="icon-mid"><use href="#i-thicken"/></svg></button>
                    <button class="float-lg" aria-label="锥度"><svg class="icon-mid"><use href="#i-taper"/></svg></button>
                    <button class="float-pin" aria-label="停靠"><svg class="icon"><use href="#i-pin"/></svg></button>
                </div>
                <div class="float-grip"><i></i><i></i></div>
            </div>
            <div class="tip" role="tooltip">拾取要对其进行操作的图元 – 将激活默认工具。使用 Ctrl 键可选择多个项。</div>

            <svg class="model markup" viewBox="260 176 1010 512" preserveAspectRatio="xMidYMin meet">
                <path d="M675.500 612l-1-10 6-9 9-8 12-6 13-7 14-7 14-5 27-6 33-5h40l24 4h110l30 1 53 6 73 6 20 6 14 8v10l-9 6-17 10-20 7-27 6-20 2-33 5-30 5-37 3h-40l-33-4-23-2h-84l-33-5-37-3-34-5" fill="none" stroke="#f01414"/>
                <path d="M819.500 570.500v17l4-4 3 7 3-1-3-7h5z" fill="#fff" stroke="#222"/>
            </svg>
        </section>
    </main>

    <footer class="status">
        <button class="pressed status-tree" aria-label="导航器"><svg class="icon"><use href="#i-tree"/></svg></button>
        <button aria-label="浏览器"><svg class="icon-18"><use href="#i-browser"/></svg></button>
        <button aria-label="全屏"><svg class="icon-18"><use href="#i-full"/></svg></button>
        <p class="message"><svg class="icon-12"><use href="#i-prompt"/></svg>拾取要对其进行操作的图元 – 将激活默认工具。使用 Ctrl 键可选择多个项。</p>
        <div class="status-right">
            <button class="mode"><svg class="icon"><use href="#i-2d"/></svg>2D</button>
            <button class="mode pressed"><svg class="icon"><use href="#i-solid"/></svg>3D</button>
            <span class="cell"></span>
            <span class="cell cell-empty"></span>
            <span class="cell cell-warn"><svg class="icon"><use href="#i-warn"/></svg></span>
            <select class="filter" aria-label="过滤器"><option>全部</option></select>
        </div>
    </footer>

    <div class="activate"><b>激活 Windows</b><span>转到"电脑设置"以激活 Windows</span></div>
    <div class="mark">
        <svg class="mark-logo" viewBox="0 0 60 60">
            <path d="M7 30C-4 10 12-2 28 14c14 14 14 32-4 20C12 26 6 12 12 6" fill="none" stroke="#a3b1bf" stroke-width="2"/>
            <path d="M9 28C-2 12 8 0 22 8" fill="none" stroke="#8d9fb0" stroke-width="4"/>
            <path d="M40 22c8-5 17-1 16 10-1 12-10 26-21 26" fill="none" stroke="#e58e90" stroke-width="4"/>
            <path d="M40 34C20 34 8 40 14 47c6 6 18 3 24 9" fill="none" stroke="#a3b1bf" stroke-width="1.500"/>
        </svg>
        <div class="mark-text"><b>野火论坛</b><span>www.proewildfire.cn</span></div>
    </div>
</div>
</body>
</html>
```
FILE: styles.css
```
* {
    box-sizing: border-box;
}

body {
    margin: 0;
    font-family: "Open Sans", "Noto Sans CJK SC", sans-serif;
    font-size: 12px;
    color: #444;
}

button {
    padding: 0;
    border: 0;
    background: none;
    font: inherit;
    color: inherit;
    display: flex;
    align-items: center;
    justify-content: center;
}

h1, h2, p, ul {
    margin: 0;
    padding: 0;
    font-weight: normal;
}

.sprite {
    position: absolute;
}

.icon {
    width: 16px;
    height: 16px;
    flex: none;
}

.icon-big {
    width: 32px;
    height: 32px;
}

.icon-mid,
.icon-tall {
    width: 20px;
    height: 20px;
    flex: none;
}

.icon-18 {
    width: 18px;
    height: 18px;
}

.icon-12 {
    width: 12px;
    height: 12px;
}

.caret {
    flex: none;
    width: 8px;
    height: 5px;
    background: #555;
    clip-path: polygon(0 0, 100% 0, 50% 100%);
}

.off {
    color: #a8a8a8;
}

.off .caret,
.caret.off {
    background: #b0b0b0;
}

.pressed {
    background: #dfe0e2;
    border: 1px solid #a8a8a8;
}

.window {
    position: relative;
    height: 100vh;
    border: 4px solid #b6babd;
    background: #e3e3e3;
    display: flex;
    flex-direction: column;
    overflow: hidden;
}

/* title bar */
.titlebar {
    height: 32px;
    padding: 0 8px 4px 10px;
    display: grid;
    grid-template-columns: 1fr auto 1fr;
    align-items: center;
}

.quick {
    display: flex;
    align-items: center;
    gap: 8px;
    padding-left: 2px;
    color: #444;
}

.quick .caret {
    margin: 0 -1px;
}

.quick .off {
    color: #aaa;
}

.quick .caret-bar {
    margin: 0;
    height: 7px;
    clip-path: polygon(0 0, 100% 0, 100% 1px, 0 1px, 0 3px, 100% 3px, 50% 100%, 0 3px);
}

.sep {
    width: 1px;
    height: 24px;
    margin: 0 -2px 0 4px;
    background: #aaa;
}

.sep-tight {
    margin: 0 0 0 -4px;
}

.title {
    font-size: 13px;
    color: #b4b6b8;
}

.controls {
    display: flex;
    gap: 11px;
    justify-content: flex-end;
}

.tabs {
    height: 26px;
    display: flex;
    border-bottom: 1px solid #bfc1c3;
}

.tab {
    width: 70px;
    height: 25px;
    margin: 1px 1px 0 0;
    padding-bottom: 4px;
    background: #cdd1d4;
    font-size: 15px;
}

.tab-file {
    width: 80px;
    margin-right: 0;
    background: #6a6a6a;
    color: #fff;
}

.tab-active {
    width: 71px;
    height: 26px;
    margin: 0;
    border-top: 1px solid #a9a9a9;
    background: #f9f9f9;
    color: #222;
}

.tabs-right {
    margin-left: auto;
    padding: 0 4px 8px 0;
    display: flex;
    align-items: center;
    gap: 8px;
}

/* ribbon */
.ribbon {
    flex: none;
    height: 114px;
    display: flex;
    background: #f9f9f9;
    border-bottom: 2px solid #9b9b9b;
}

.group {
    flex: none;
    display: flex;
    flex-direction: column;
    border-right: 1px solid #bcbec0;
}

.body {
    flex: 1;
    display: flex;
}

.caption {
    height: 25px;
    display: flex;
    align-items: center;
    justify-content: center;
    gap: 4px;
    background: #eceeef;
}

.big {
    flex-direction: column;
    justify-content: flex-start;
    padding-top: 6px;
    line-height: 17px;
}

.big span {
    margin-top: 9px;
}

.big .caret {
    margin-top: 6px;
}

.stack {
    display: flex;
    flex-direction: column;
}

.tool {
    height: 28px;
    justify-content: flex-start;
    white-space: nowrap;
}

.tool span {
    margin-left: 4px;
}

.tool .caret {
    margin-left: 6px;
}

.two .tool {
    height: 43px;
}

.col {
    width: 38px;
}

.narrow {
    width: 24px;
}

.medium {
    width: 78px;
}

.wide {
    width: 102px;
}

.ruled {
    width: 35px;
    background: linear-gradient(#dcdcdc, #dcdcdc) 25px 10px / 1px 66px no-repeat;
}

.g-clip {
    width: 53px;
}

.g-clip .body {
    justify-content: center;
}

.g-select {
    width: 109px;
}

.g-select .big,
.g-shape .big {
    width: 47px;
}

.g-sketch {
    width: 236px;
}

.g-sketch .big {
    width: 63px;
}

.g-editsk {
    width: 141px;
}

.g-editsk .big {
    width: 51px;
}

.g-shape {
    width: 113px;
}

.g-edit {
    width: 229px;
}

.g-edit .big {
    width: 75px;
}

.g-eng {
    width: 137px;
}

.g-surf {
    width: 69px;
}

.g-eng .body,
.g-surf .body {
    padding-left: 7px;
}

.g-one {
    width: 53px;
}

.g-one .body {
    justify-content: center;
}

.g-rest {
    flex: 1;
    border-right: 0;
}

/* workspace */
.workspace {
    flex: 1;
    display: flex;
    min-height: 0;
}

.navigator {
    width: 256px;
    padding-bottom: 4px;
    display: flex;
    flex-direction: column;
    background: #eeeff1;
    border-right: 3px double #a3a5a7;
}

.nav-tabs {
    display: flex;
    height: 29px;
}

.nav-tab {
    flex: none;
    gap: 3px;
    padding: 0 4px 2px 0;
    background: #dcdfdf;
    border: 1px solid #a5a5a5;
    border-width: 1px 1px 1px 0;
    color: #777;
}

.nav-tab-active {
    width: 76px;
    gap: 1px;
    padding-right: 0;
    background: #eeeff1;
    border-width: 0 1px 0 0;
    color: #333;
}

.nav-folders {
    width: 101px;
}

.nav-fav {
    width: 76px;
}

.nav-head {
    height: 28px;
    padding: 0 10px 2px 28px;
    display: flex;
    align-items: center;
}

.nav-head .caret {
    margin: 0 12px 0 6px;
}

.nav-head h2 {
    margin-right: auto;
    font-size: 12px;
    font-weight: 500;
    color: #333;
}

.tree {
    flex: 1;
    margin: 0 5px 0 8px;
    background: #fefefe;
    border-top: 1px solid #cdcdcd;
    list-style: none;
}

.tree li {
    height: 24px;
    padding-left: 4px;
    display: flex;
    align-items: center;
    gap: 4px;
}

.tree label {
    margin-left: 1px;
}

.tree .child {
    padding-left: 10px;
}

.tree .child input {
    margin-left: 3px;
}

.twist {
    width: 7px;
    height: 9px;
    background: #888;
    clip-path: polygon(0 0, 100% 50%, 0 100%);
}

.tree input {
    appearance: none;
    width: 12px;
    height: 12px;
    margin: 0;
    display: grid;
    place-items: center;
    background: #fff;
    border: 1px solid #777;
}

.tree input:checked::after {
    content: "";
    width: 4px;
    height: 7px;
    margin-top: -2px;
    border: solid #222;
    border-width: 0 2px 2px 0;
    transform: rotate(40deg);
}

.canvas {
    position: relative;
    flex: 1;
    display: flex;
    flex-direction: column;
    align-items: center;
    background: #e8e9ed;
}

.model {
    position: absolute;
    top: 0;
    left: 0;
    width: 100%;
    height: 100%;
    shape-rendering: crispEdges;
}

.markup {
    pointer-events: none;
}

.model-text {
    font-family: "Liberation Mono", monospace;
    font-size: 10px;
}

.viewbar {
    position: relative;
    margin-top: 6px;
    height: 32px;
    padding: 0 7px 0 4px;
    display: flex;
    align-items: center;
    gap: 2px;
    background: #f7f7f7;
    border: 1px solid #a0a0a0;
}

.viewbar button {
    position: relative;
    width: 24px;
    height: 24px;
}

.viewbar .more::after {
    content: "";
    position: absolute;
    right: 0;
    bottom: 2px;
    border: 2px solid #555;
    border-top-color: transparent;
    border-left-color: transparent;
}

.floatbar {
    position: absolute;
    left: 507px;
    top: 395px;
    background: linear-gradient(#f3f3f3, #dedede);
    border: 1px solid #a8a8a8;
    border-radius: 4px 4px 0 0;
}

.float-row {
    height: 31px;
    display: flex;
    align-items: center;
    border-bottom: 1px solid #b5b5b5;
}

.float-fold {
    width: 25px;
    height: 30px;
    border-right: 1px solid #b5b5b5;
}

.float-title {
    padding: 0 8px 0 10px;
    font-size: 15px;
    color: #000;
}

.float-sm {
    width: 28px;
    height: 28px;
}

.float-depth {
    width: 49px;
    gap: 7px;
}

.float-lg {
    width: 32px;
}

.float-pin {
    width: 24px;
    height: 30px;
    border-left: 1px solid #b5b5b5;
}

.float-grip {
    height: 7px;
    padding: 2px 3px;
    display: flex;
    justify-content: space-between;
}

.float-grip i {
    width: 22px;
    background: repeating-linear-gradient(90deg, #aaa 0 1px, transparent 1px 2px);
}

.tip {
    position: absolute;
    left: 507px;
    top: 445px;
    width: 236px;
    height: 52px;
    padding: 8px;
    line-height: 17px;
    background: #e0f1f9;
    border: 1px solid #bfc6ca;
}

/* status bar */
.status {
    flex: none;
    height: 36px;
    padding-left: 6px;
    display: flex;
    align-items: center;
    background: #eeeff1;
    border-top: 2px solid #999;
}

.status > button {
    width: 22px;
    height: 22px;
    margin-right: 4px;
}

.message {
    height: 22px;
    margin-left: 5px;
    padding: 0 0 3px 3px;
    display: flex;
    align-items: center;
    gap: 1px;
    border-left: 1px solid #a8a8a8;
    font-size: 11px;
    white-space: nowrap;
}

.status-right {
    width: 480px;
    height: 26px;
    margin-left: auto;
    padding-left: 2px;
    display: flex;
    align-items: center;
    border-left: 1px solid #b5b5b5;
}

.mode {
    width: 44px;
    height: 25px;
    gap: 4px;
    font-size: 13px;
}

.mode.pressed {
    margin-right: 26px;
}

.cell {
    height: 26px;
    border-left: 1px solid #b5b5b5;
}

.cell-empty {
    margin-left: 40px;
}

.cell-warn {
    width: 29px;
    margin-left: -1px;
    display: flex;
    align-items: center;
    justify-content: center;
    border-right: 1px solid #b5b5b5;
}

.filter {
    appearance: none;
    width: 178px;
    height: 24px;
    margin: 0 17px 0 auto;
    padding: 0 8px;
    background:
        linear-gradient(#b5b5b5, #b5b5b5) right 15px top 0 / 1px 100% no-repeat,
        conic-gradient(from -45deg at 50% 100%, transparent 0deg, transparent 360deg) 0 0 / 0 0 no-repeat,
        linear-gradient(45deg, transparent 50%, #666 50%) right 8px center / 4px 4px no-repeat,
        linear-gradient(-45deg, transparent 50%, #666 50%) right 4px center / 4px 4px no-repeat,
        #fafafa;
    border: 1px solid #b5b5b5;
    border-radius: 0;
    font: inherit;
    color: #555;
}

/* overlays in the lower right corner */
.activate {
    position: absolute;
    left: calc(100% - 195px);
    bottom: 28px;
    display: flex;
    flex-direction: column;
    color: #b4b5b7;
    white-space: nowrap;
    pointer-events: none;
}

.activate b {
    font-size: 20px;
    font-weight: normal;
    line-height: 24px;
}

.activate span {
    font-size: 14px;
    line-height: 24px;
    color: #c6c7c9;
}

.mark {
    position: absolute;
    right: 0;
    bottom: 1px;
    width: 207px;
    height: 62px;
    padding-left: 1px;
    display: flex;
    background: rgba(255, 255, 255, 0.3);
    pointer-events: none;
}

.mark-logo {
    width: 58px;
    height: 62px;
}

.mark-text {
    display: flex;
    flex-direction: column;
    white-space: nowrap;
}

.mark-text b {
    padding-left: 11px;
    font-size: 29px;
    font-weight: 900;
    line-height: 38px;
    color: rgba(90, 190, 140, 0.7);
}

.mark-text span {
    font-size: 15px;
    line-height: 20px;
    color: rgba(150, 210, 195, 0.75);
}
```
